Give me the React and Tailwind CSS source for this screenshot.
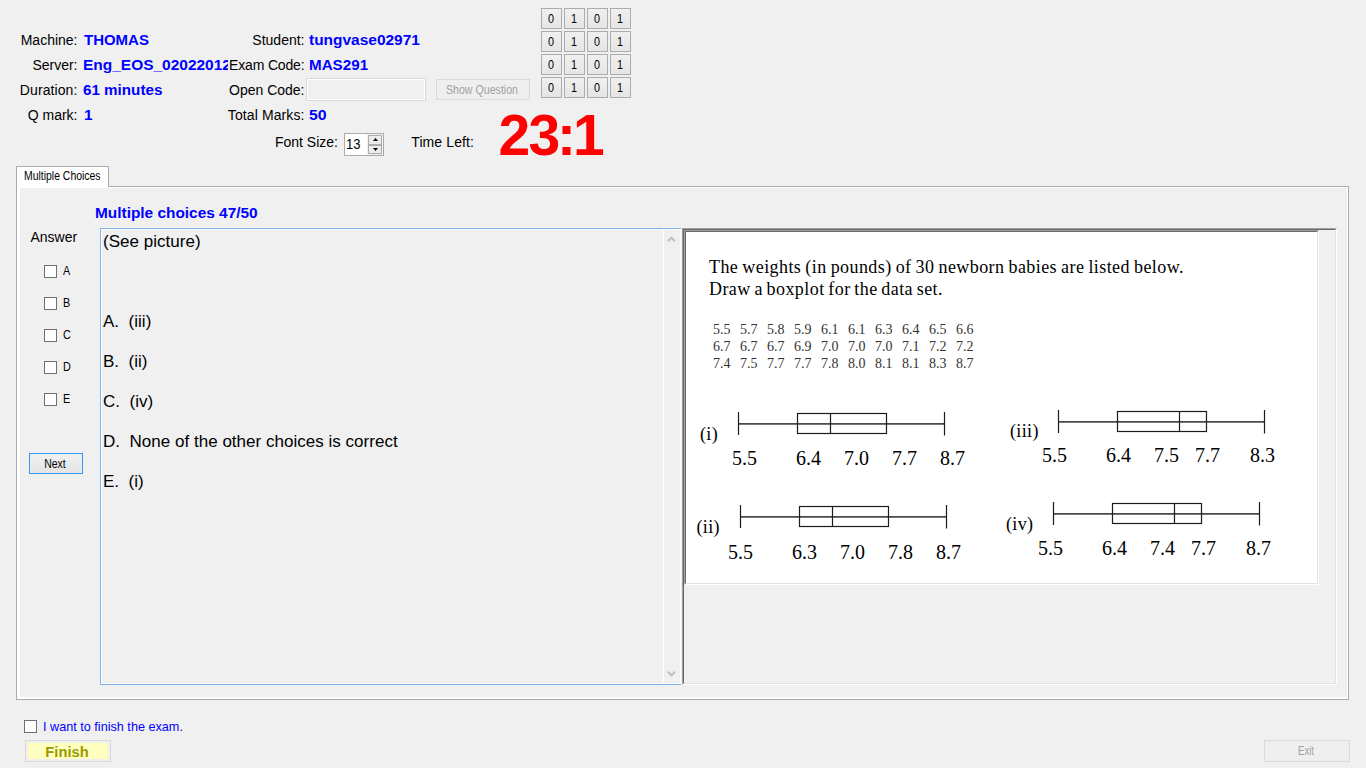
import React from "react";

const ROWS = [
  ["5.5", "5.7", "5.8", "5.9", "6.1", "6.1", "6.3", "6.4", "6.5", "6.6"],
  ["6.7", "6.7", "6.7", "6.9", "7.0", "7.0", "7.0", "7.1", "7.2", "7.2"],
  ["7.4", "7.5", "7.7", "7.7", "7.8", "8.0", "8.1", "8.1", "8.3", "8.7"],
];

const PLOTS = [
  { name: "(i)", nx: 700, ny: 440, x: 738.5, y: 423.5, box: 797.5, med: 830.5, ly: 464.5, labels: [[732, "5.5"], [796, "6.4"], [844, "7.0"], [892, "7.7"], [940, "8.7"]] },
  { name: "(ii)", nx: 696.5, ny: 533, x: 740.5, y: 516.5, box: 799.5, med: 832.5, ly: 558.5, labels: [[728, "5.5"], [792, "6.3"], [840, "7.0"], [888, "7.8"], [936, "8.7"]] },
  { name: "(iii)", nx: 1010, ny: 437, x: 1058.5, y: 421.5, box: 1117.5, med: 1179.5, ly: 461.5, labels: [[1042, "5.5"], [1106, "6.4"], [1154, "7.5"], [1195, "7.7"], [1250, "8.3"]] },
  { name: "(iv)", nx: 1006, ny: 530, x: 1053.5, y: 513.5, box: 1112.5, med: 1174.5, ly: 554.5, labels: [[1038, "5.5"], [1102, "6.4"], [1150, "7.4"], [1191, "7.7"], [1246, "8.7"]] },
];

function BoxPlots() {
  return (
    <svg width="631" height="190" viewBox="686 390 631 190" className="block">
      {PLOTS.map((p) => (
        <g key={p.name}>
          <g stroke="#1c1c1c" strokeWidth="1.2" fill="none">
            <path d={`M${p.x} ${p.y + 0.4}H${p.x + 206}`} stroke="#4a4a4a" strokeWidth="1.7" />
            <path d={`M${p.x} ${p.y - 11.5}V${p.y + 11.5}M${p.x + 206} ${p.y - 11.5}V${p.y + 12}M${p.med} ${p.y - 10}V${p.y + 10}`} />
            <rect x={p.box} y={p.y - 10} width="89" height="20" />
          </g>
          <text x={p.nx} y={p.ny} fontSize="18" letterSpacing="0.35">{p.name}</text>
          {p.labels.map(([x, t]) => (
            <text key={x} x={x} y={p.ly} fontSize="20">{t}</text>
          ))}
        </g>
      ))}
    </svg>
  );
}

function Label({ children, className = "" }) {
  return <div className={`text-right shrink-0 whitespace-nowrap ${className}`}>{children}</div>;
}

function Value({ children, className = "" }) {
  return <div className={`origin-left whitespace-nowrap font-bold text-[#0000ff] ${className}`}>{children}</div>;
}

function Check() {
  return <div className="size-[13px] shrink-0 border border-[#707070] bg-white" />;
}

function Arrow({ up }) {
  return (
    <svg width="9" height="6" viewBox="0 0 9 6" className="block">
      <path d={up ? "M1 5.2L4.5 1.7L8 5.2" : "M1 0.8L4.5 4.3L8 0.8"} fill="none" stroke="#bfbfbf" strokeWidth="2" />
    </svg>
  );
}

function Header() {
  return (
    <div className="flex h-[166px] flex-col text-[14px]">
      <div className="flex h-[128px]">
        <div className="flex w-[541px] flex-col pt-[28px] leading-[25px]">
          <div className="flex h-[25px]">
            <Label className="w-[77.5px]">Machine:</Label>
            <div className="w-[144px] pl-[6px]"><Value className="scale-x-[1.07]">THOMAS</Value></div>
            <Label className="w-[83px]">Student:</Label>
            <div className="pl-[4.5px]"><Value className="scale-x-[1.105]">tungvase02971</Value></div>
          </div>
          <div className="flex h-[25px]">
            <Label className="w-[77.5px]">Server:</Label>
            <div className="w-[150px] overflow-hidden pl-[5px]"><Value className="scale-x-[1.105]">Eng_EOS_02022012</Value></div>
            <Label className="w-[77px] tracking-[-0.15px]">Exam Code:</Label>
            <div className="pl-[4.5px]"><Value className="scale-x-[1.085]">MAS291</Value></div>
          </div>
          <div className="flex h-[25px]">
            <Label className="w-[77.5px] tracking-[0.1px]">Duration:</Label>
            <div className="w-[144px] pl-[5.5px]"><Value className="scale-x-[1.085]">61 minutes</Value></div>
            <Label className="w-[83px]">Open Code:</Label>
            <div className="ml-[1.5px] h-[23px] w-[120px] border border-[#d9d9d9]">
              <div className="h-full border border-white" />
            </div>
            <div className="ml-[10px] mt-px h-[21px] w-[94px] border border-[#d9d9d9] bg-[#efefef] text-center text-[12px] leading-[20px] text-[#a0a0a0]">
              <div className="-ml-[10px] -mr-2 scale-x-[0.885]">Show Question</div>
            </div>
          </div>
          <div className="flex h-[25px]">
            <Label className="w-[77.5px]">Q mark:</Label>
            <div className="w-[144px] pl-[6px]"><Value className="scale-x-[1.1]">1</Value></div>
            <Label className="w-[83px] tracking-[0.1px]">Total Marks:</Label>
            <div className="pl-[4.5px]"><Value className="scale-x-[1.13]">50</Value></div>
          </div>
        </div>
        <div className="grid h-[90px] grid-cols-[repeat(4,21px)] gap-[2px] pt-[8px] text-[12px]">
          {Array.from({ length: 16 }, (_, i) => (
            <div key={i} className="h-[21px] border border-[#acacac] bg-linear-to-b from-[#f0f0f0] to-[#e5e5e5] pr-px text-center leading-[20px]">
              <div className="scale-x-[0.9]">{i % 2}</div>
            </div>
          ))}
        </div>
      </div>
      <div className="flex h-[38px] items-start leading-[28px]">
        <Label className="w-[338px]">Font Size:</Label>
        <div className="ml-[6px] mt-[5px] flex h-[23px] w-[40px] border border-[#ababab] bg-white text-[14px] leading-[20px]">
          <div className="w-[22px] pl-[1px]"><div className="origin-left scale-x-[0.93]">13</div></div>
          <div className="flex w-[16px] flex-col bg-[#f0f0f0] p-px">
            {[0, 1].map((i) => (
              <div key={i} className="flex h-[9.5px] items-center justify-center border border-[#acacac] bg-[#ececec]">
                <svg width="5" height="3" viewBox="0 0 5 3" className="block"><path d={i ? "M0 0H5L2.5 3Z" : "M0 3H5L2.5 0Z"} /></svg>
              </div>
            ))}
          </div>
        </div>
        <Label className="w-[90px] tracking-[0.1px]">Time Left:</Label>
        <div className="-mt-[12px] ml-[24.5px] text-[57px] font-bold leading-[39px] text-[#ff0000]">
          <span className="tracking-[-1.8px]">2</span>
          <span className="tracking-[-3px]">3:</span>
          <span className="tracking-[-3px]">1</span>
        </div>
      </div>
    </div>
  );
}

function Answers() {
  return (
    <div className="flex w-[80px] shrink-0 flex-col text-[12px]">
      <div className="pl-[10.5px] text-[14px] leading-[18px]">Answer</div>
      <div className="mt-[9px] flex flex-col pl-[24px]">
        {["A", "B", "C", "D", "E"].map((c) => (
          <div key={c} className="flex h-[32px] items-center gap-[6px] leading-[14px]">
            <Check />
            <div className="origin-left scale-x-[0.9]">{c}</div>
          </div>
        ))}
      </div>
      <div className="ml-[9px] mt-[38px] h-[21px] w-[54px] border border-[#3399ff] bg-linear-to-b from-[#f0f0f0] to-[#e5e5e5] pr-[2px] text-center leading-[20px]">
        <div className="scale-x-[0.87]">Next</div>
      </div>
    </div>
  );
}

function Question() {
  return (
    <div className="flex h-[457px] w-[581px] shrink-0 border-y border-l border-[#7eb4ea]">
      <div className="flex flex-1 border border-white">
        <div className="flex-1 whitespace-pre pl-px pt-[2px] text-[17px] leading-[20px] tracking-[0.02px]">
          {"(See picture)\n\n\n\nA.  (iii)\n\nB.  (ii)\n\nC.  (iv)\n\nD.  None of the other choices is correct\n\nE.  (i)"}
        </div>
        <div className="flex w-[17px] flex-col items-center justify-between border-l border-white py-[6px] pr-[2px]">
          <Arrow up />
          <Arrow />
        </div>
      </div>
    </div>
  );
}

function Picture() {
  return (
    <div className="ml-px h-[457px] w-[655px] shrink-0 border border-b-white border-l-[#a0a0a0] border-r-white border-t-[#a0a0a0]">
      <div className="h-full border border-b-[#e3e3e3] border-l-[#696969] border-r-[#e3e3e3] border-t-[#696969]">
        <div className="h-[355px] w-[635px] border border-b-white border-l-[#a0a0a0] border-r-white border-t-[#a0a0a0]">
          <div className="flex h-full flex-col justify-between overflow-hidden border border-b-[#e3e3e3] border-l-[#696969] border-r-[#e3e3e3] border-t-[#696969] bg-white font-['Liberation_Serif',serif]">
            <div className="pl-[23px] pt-[24px] text-[18px] leading-[22px] whitespace-nowrap">
              <div className="tracking-[0.43px] [word-spacing:-0.9px]">The weights (in pounds) of 30 newborn babies are listed below.</div>
              <div className="tracking-[0.43px] [word-spacing:-1.2px]">Draw a boxplot for the data set.</div>
              <div className="mt-[21px] pl-[4px] text-[14px] leading-[17px] text-[#333]">
                {ROWS.map((r, i) => (
                  <div key={i} className="grid grid-cols-[repeat(10,27px)]">
                    {r.map((v, j) => <span key={j}>{v}</span>)}
                  </div>
                ))}
              </div>
            </div>
            <div className="-mt-4 mb-[3px]"><BoxPlots /></div>
          </div>
        </div>
      </div>
    </div>
  );
}

export default function App() {
  return (
    <div className="flex h-[768px] w-[1366px] flex-col overflow-hidden bg-[#f0f0f0] font-['Liberation_Sans',sans-serif] text-black">
      <Header />
      <div className="relative z-10 ml-[16px] -mb-px h-[21px] w-[93px] shrink-0 border-x border-t border-[#acacac] bg-white pl-[7px] text-[12px] leading-[19px]">
        <div className="origin-left whitespace-nowrap scale-x-[0.87]">Multiple Choices</div>
      </div>
      <div className="ml-[16px] h-[514px] w-[1333px] shrink-0 border border-[#acacac] bg-white pb-[2px] pl-[3px] pr-px pt-px">
        <div className="h-full bg-[#f0f0f0] pt-[15px]">
          <div className="pl-[75px] text-[14px] leading-[20px]"><Value className="scale-x-[1.1]">Multiple choices 47/50</Value></div>
          <div className="flex pt-[5px]">
            <Answers />
            <Question />
            <Picture />
          </div>
        </div>
      </div>
      <div className="ml-[24px] mt-[20px] flex h-[13px] items-center gap-[6px] text-[13px] text-[#0000ff]">
        <Check />
        <div className="origin-left scale-x-[0.973]">I want to finish the exam.</div>
      </div>
      <div className="mt-[7px] flex justify-between pl-[25px] pr-[16px]">
        <div className="h-[22px] w-[86px] border border-[#d9d9d9] p-[2px]">
          <div className="h-full bg-[#ffffc0] pr-[2px] text-center text-[14px] font-bold leading-[18px] text-[#999900]">
            <div className="scale-x-[1.05]">Finish</div>
          </div>
        </div>
        <div className="h-[22px] w-[86px] border border-[#d9d9d9] bg-[#efefef] pr-[2px] text-center text-[12px] leading-[21px] text-[#a0a0a0]">
          <div className="scale-x-[0.8]">Exit</div>
        </div>
      </div>
    </div>
  );
}
